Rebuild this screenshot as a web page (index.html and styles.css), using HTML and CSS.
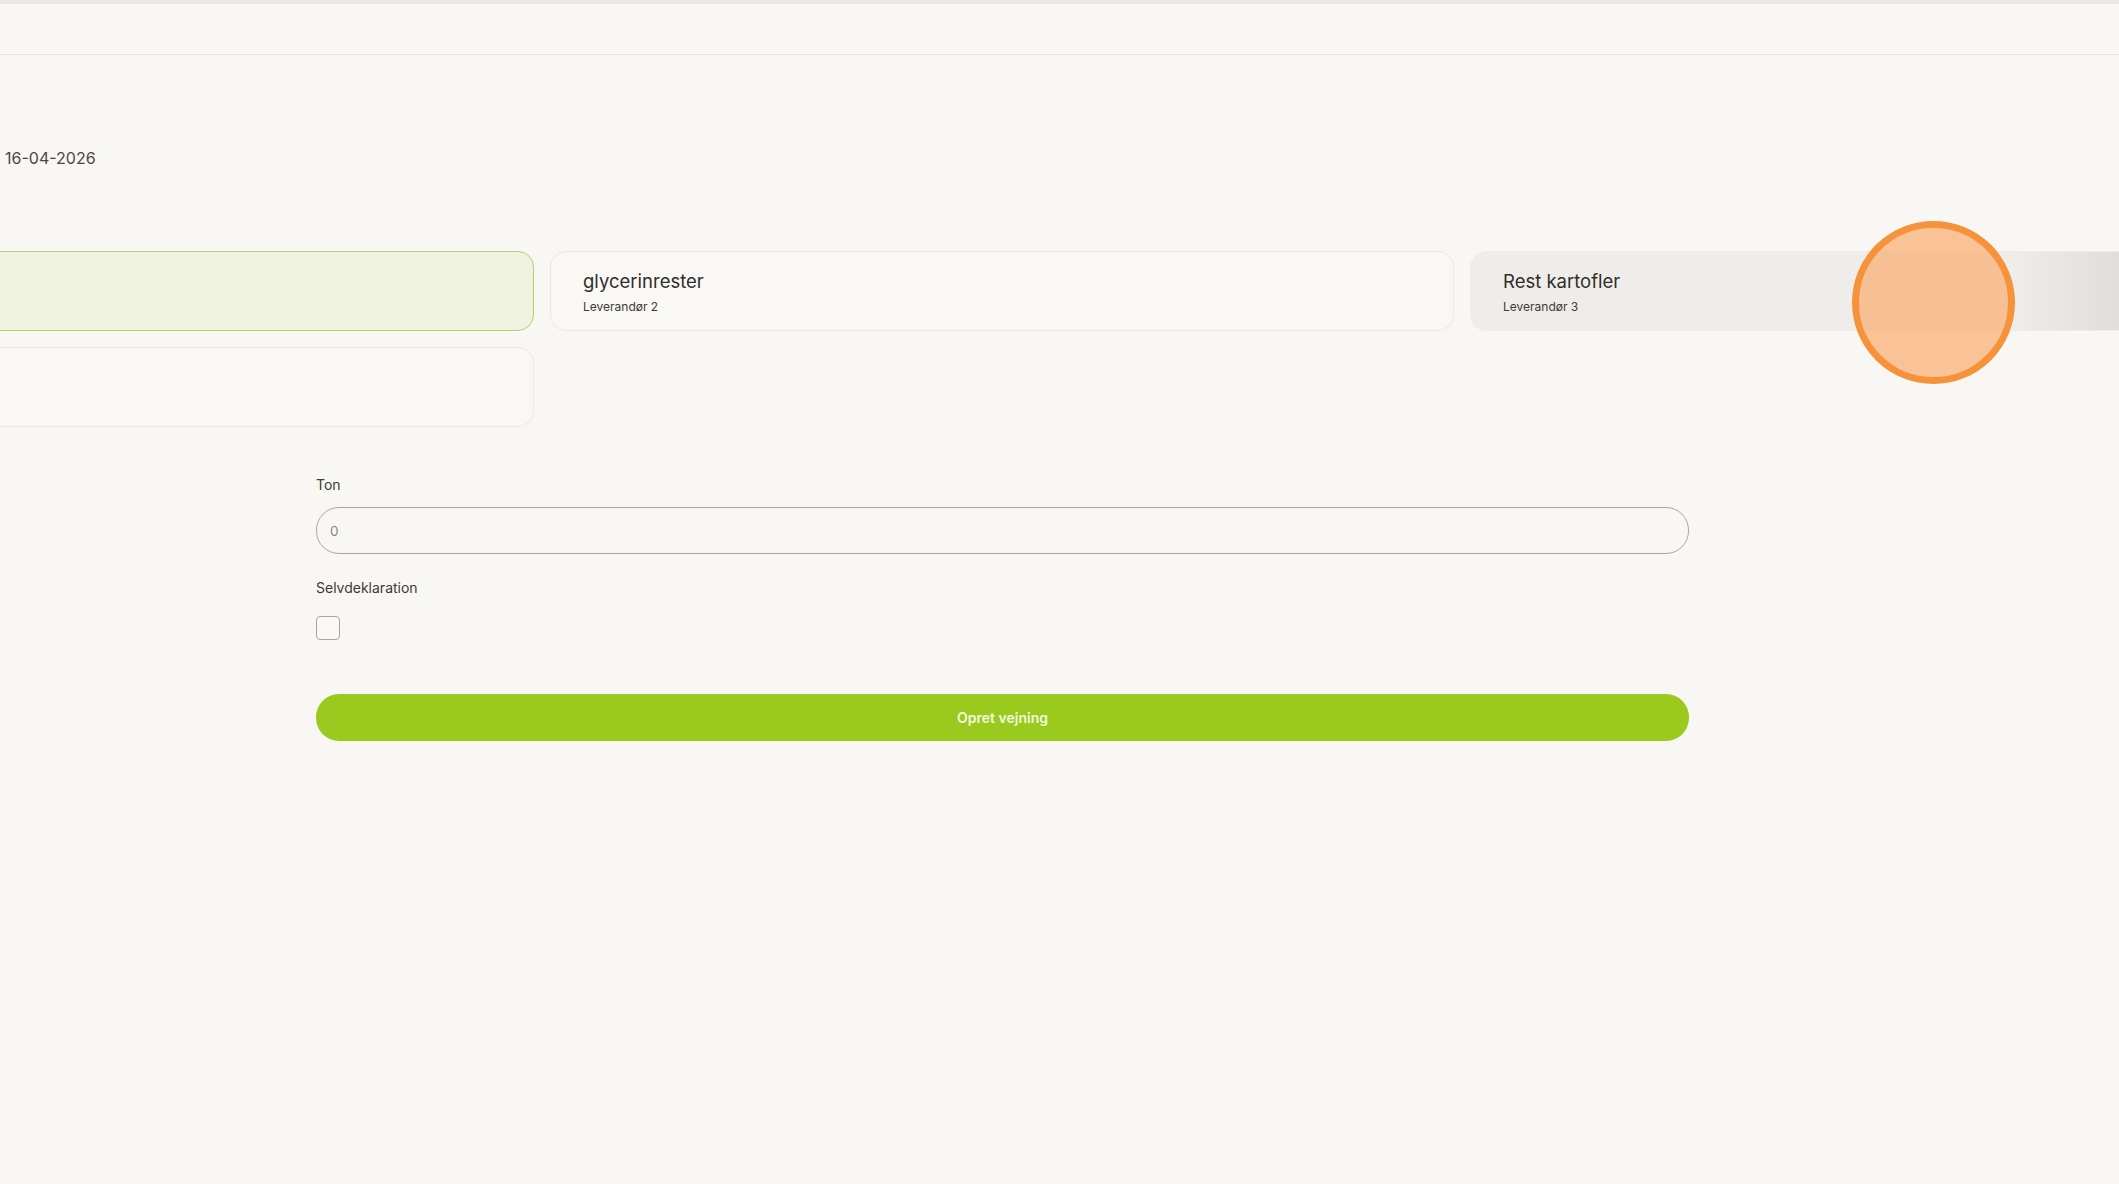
FILE: index.html
```html
<!DOCTYPE html>
<html lang="da">
<head>
    <meta charset="UTF-8">
    <meta name="viewport" content="width=device-width, initial-scale=1.0">
    <title>Opret vejning</title>
    <link rel="stylesheet" href="styles.css">
</head>
<body>
    <div class="topbar"></div>
    <div class="page">
        <div class="date">16-04-2026</div>
        <div class="products">
            <div class="product selected">
                <div class="name">&nbsp;</div>
                <div class="supplier">&nbsp;</div>
            </div>
            <div class="product">
                <div class="name">glycerinrester</div>
                <div class="supplier">Leverandør 2</div>
            </div>
            <div class="product hover">
                <div class="name">Rest kartofler</div>
                <div class="supplier">Leverandør 3</div>
            </div>
            <div class="product">
                <div class="name">&nbsp;</div>
                <div class="supplier">&nbsp;</div>
            </div>
        </div>
        <form class="weigh-form">
            <label class="field-label" for="ton">Ton</label>
            <input class="field-input" id="ton" type="text" placeholder="0">
            <label class="field-label check-label" for="selv">Selvdeklaration</label>
            <input class="check" id="selv" type="checkbox">
            <button type="button" class="submit">Opret vejning</button>
        </form>
    </div>
    <div class="click-dot"></div>
</body>
</html>
```

FILE: styles.css
```css
body {
    font-family: 'Inter', 'Liberation Sans', sans-serif;
    background-color: #f9f7f3;
    color: #2f2d2a;
    margin: 0;
    padding: 0;
    overflow: hidden;
}
.topbar {
    height: 50px;
    border-top: 4px solid #ebe8e3;
    border-bottom: 1px solid #e6e2db;
}
.page {
    position: relative;
    overflow: hidden;
}
.date {
    margin: 91px 0 0 5px;
    font-size: 16px;
    line-height: 24px;
    color: #4a4743;
}
.products {
    display: grid;
    grid-template-columns: 904px 904px 904px;
    column-gap: 16px;
    row-gap: 16px;
    margin: 81px 0 0 -370px;
}
.product {
    box-sizing: border-box;
    height: 80px;
    padding: 17px 32px 0;
    border: 1px solid #ece9e3;
    border-radius: 16px;
    background-color: #faf8f4;
}
.product.selected {
    background-color: #eff3df;
    border-color: #b3cf75;
}
.product.hover {
    border-color: #efedea;
    background: linear-gradient(to right, #efedea 0, #efedea 540px, #dfdedb 650px);
}
.name {
    font-size: 18.5px;
    line-height: 24px;
    color: #2f2d2a;
}
.supplier {
    margin-top: 6px;
    font-size: 12px;
    line-height: 16px;
    color: #3d3a36;
}
.weigh-form {
    display: flex;
    flex-direction: column;
    align-items: flex-start;
    width: 1373px;
    margin: 48px 0 0 316px;
}
.field-label {
    font-size: 14px;
    line-height: 20px;
    color: #3d3a36;
}
.field-input {
    box-sizing: border-box;
    width: 100%;
    height: 47px;
    margin-top: 12px;
    padding: 0 13px;
    border: 1px solid #aaa6a0;
    border-radius: 23px;
    background: transparent;
    font-family: inherit;
    font-size: 13.5px;
    color: #2f2d2a;
    outline: none;
}
.field-input::placeholder {
    color: #8a8680;
}
.check-label {
    margin-top: 24px;
}
.check {
    appearance: none;
    box-sizing: border-box;
    width: 24px;
    height: 24px;
    margin: 18px 0 0;
    border: 1px solid #a8a49f;
    border-radius: 4px;
    background: #faf8f4;
}
.submit {
    width: 100%;
    height: 47px;
    margin-top: 54px;
    border: none;
    border-radius: 23px;
    background-color: #9aca1e;
    color: #f2fadc;
    font-family: inherit;
    font-size: 14px;
    font-weight: 600;
    cursor: pointer;
}
.click-dot {
    position: absolute;
    left: 1852px;
    top: 221px;
    width: 163px;
    height: 163px;
    box-sizing: border-box;
    border: 7px solid #f5923a;
    border-radius: 50%;
    background-color: rgba(250, 160, 90, 0.6);
}
```
